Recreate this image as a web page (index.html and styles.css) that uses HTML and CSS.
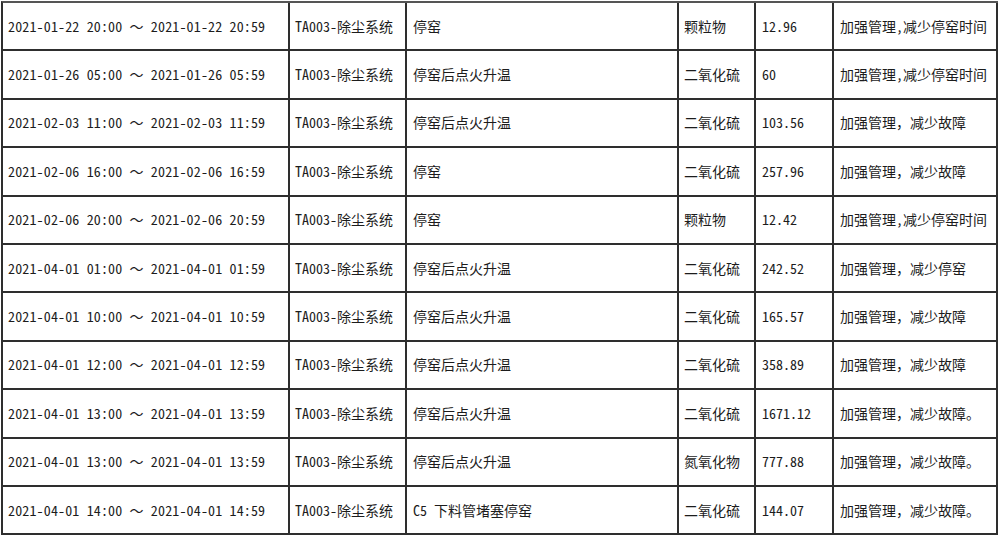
FILE: index.html
```html
<!DOCTYPE html>
<html lang="zh-CN">
<head>
<meta charset="utf-8">
<title>超标记录</title>
<link rel="stylesheet" href="styles.css">
</head>
<body>
<table class="records">
  <colgroup>
    <col class="c-time">
    <col class="c-sys">
    <col class="c-reason">
    <col class="c-item">
    <col class="c-val">
    <col class="c-action">
  </colgroup>
  <tbody>
    <tr><td class="time">2021-01-22 20:00 <span class="fw">～</span> 2021-01-22 20:59</td><td>TA003-除尘系统</td><td>停窑</td><td>颗粒物</td><td>12.96</td><td>加强管理,减少停窑时间</td></tr>
    <tr><td class="time">2021-01-26 05:00 <span class="fw">～</span> 2021-01-26 05:59</td><td>TA003-除尘系统</td><td>停窑后点火升温</td><td>二氧化硫</td><td>60</td><td>加强管理,减少停窑时间</td></tr>
    <tr><td class="time">2021-02-03 11:00 <span class="fw">～</span> 2021-02-03 11:59</td><td>TA003-除尘系统</td><td>停窑后点火升温</td><td>二氧化硫</td><td>103.56</td><td>加强管理<span class="fw">，</span>减少故障</td></tr>
    <tr><td class="time">2021-02-06 16:00 <span class="fw">～</span> 2021-02-06 16:59</td><td>TA003-除尘系统</td><td>停窑</td><td>二氧化硫</td><td>257.96</td><td>加强管理<span class="fw">，</span>减少故障</td></tr>
    <tr><td class="time">2021-02-06 20:00 <span class="fw">～</span> 2021-02-06 20:59</td><td>TA003-除尘系统</td><td>停窑</td><td>颗粒物</td><td>12.42</td><td>加强管理,减少停窑时间</td></tr>
    <tr><td class="time">2021-04-01 01:00 <span class="fw">～</span> 2021-04-01 01:59</td><td>TA003-除尘系统</td><td>停窑后点火升温</td><td>二氧化硫</td><td>242.52</td><td>加强管理<span class="fw">，</span>减少停窑</td></tr>
    <tr><td class="time">2021-04-01 10:00 <span class="fw">～</span> 2021-04-01 10:59</td><td>TA003-除尘系统</td><td>停窑后点火升温</td><td>二氧化硫</td><td>165.57</td><td>加强管理<span class="fw">，</span>减少故障</td></tr>
    <tr><td class="time">2021-04-01 12:00 <span class="fw">～</span> 2021-04-01 12:59</td><td>TA003-除尘系统</td><td>停窑后点火升温</td><td>二氧化硫</td><td>358.89</td><td>加强管理<span class="fw">，</span>减少故障</td></tr>
    <tr><td class="time">2021-04-01 13:00 <span class="fw">～</span> 2021-04-01 13:59</td><td>TA003-除尘系统</td><td>停窑后点火升温</td><td>二氧化硫</td><td>1671.12</td><td>加强管理<span class="fw">，</span>减少故障<span class="fw">。</span></td></tr>
    <tr><td class="time">2021-04-01 13:00 <span class="fw">～</span> 2021-04-01 13:59</td><td>TA003-除尘系统</td><td>停窑后点火升温</td><td>氮氧化物</td><td>777.88</td><td>加强管理<span class="fw">，</span>减少故障<span class="fw">。</span></td></tr>
    <tr><td class="time">2021-04-01 14:00 <span class="fw">～</span> 2021-04-01 14:59</td><td>TA003-除尘系统</td><td>C5 下料管堵塞停窑</td><td>二氧化硫</td><td>144.07</td><td>加强管理<span class="fw">，</span>减少故障<span class="fw">。</span></td></tr>
  </tbody>
</table>
</body>
</html>
```

FILE: styles.css
```css
html, body {
  margin: 0;
  padding: 0;
  background: #ffffff;
}

body {
  padding: 1px 0 0 1px;
}

.records {
  border-collapse: separate;
  border-spacing: 0;
  table-layout: fixed;
  width: 997px;
  border-left: 2px solid #2e2e2e;
  border-top: 2px solid #555555;
  font-family: "Noto Sans CJK SC", sans-serif;
  font-feature-settings: "hwid" 1;
  font-size: 14px;
  color: #1c1c1c;
}

.c-time { width: 287px; }
.c-sys { width: 117px; }
.c-reason { width: 272px; }
.c-item { width: 77px; }
.c-val { width: 78px; }
.c-action { width: 164px; }

.records td {
  box-sizing: border-box;
  height: 48.4px;
  padding: 0 0 1px 5px;
  border-right: 2px solid #2e2e2e;
  border-bottom: 2px solid #2e2e2e;
  vertical-align: middle;
  white-space: nowrap;
  overflow: hidden;
  line-height: 20px;
}

.records td.time {
  padding-left: 5px;
  letter-spacing: 0.15px;
}

.records td:nth-child(3),
.records td:nth-child(5),
.records td:nth-child(6) {
  padding-left: 6px;
}

.fw {
  font-feature-settings: normal;
}
```
